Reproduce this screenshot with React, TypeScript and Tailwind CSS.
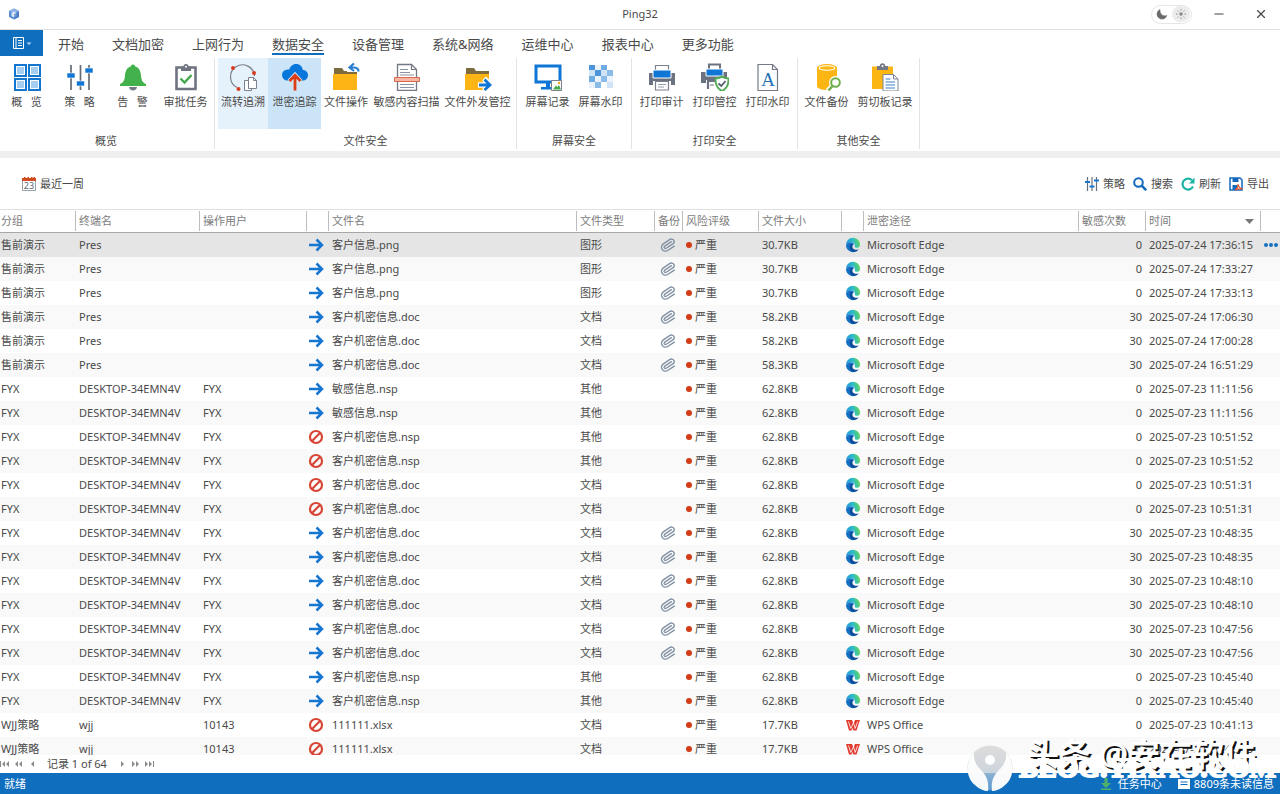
import { useState } from 'react';
import type { ReactNode } from 'react';
import { Minus, Paperclip, X } from 'lucide-react';

type Status = 'sent' | 'blocked';
type App = 'edge' | 'wps';

interface LeakRecord {
  group: string;
  terminal: string;
  user: string;
  status: Status;
  file: string;
  type: string;
  backup: boolean;
  size: string;
  app: App;
  hits: number;
  time: string;
}

function row(
  group: string,
  terminal: string,
  user: string,
  status: Status,
  file: string,
  type: string,
  backup: boolean,
  size: string,
  hits: number,
  time: string,
  app: App = 'edge'
): LeakRecord {
  return { group, terminal, user, status, file, type, backup, size, hits, time, app };
}

const PC = 'DESKTOP-34EMN4V';

const RECORDS: LeakRecord[] = [
  row('售前演示', 'Pres', '', 'sent', '客户信息.png', '图形', true, '30.7KB', 0, '2025-07-24 17:36:15'),
  row('售前演示', 'Pres', '', 'sent', '客户信息.png', '图形', true, '30.7KB', 0, '2025-07-24 17:33:27'),
  row('售前演示', 'Pres', '', 'sent', '客户信息.png', '图形', true, '30.7KB', 0, '2025-07-24 17:33:13'),
  row('售前演示', 'Pres', '', 'sent', '客户机密信息.doc', '文档', true, '58.2KB', 30, '2025-07-24 17:06:30'),
  row('售前演示', 'Pres', '', 'sent', '客户机密信息.doc', '文档', true, '58.2KB', 30, '2025-07-24 17:00:28'),
  row('售前演示', 'Pres', '', 'sent', '客户机密信息.doc', '文档', true, '58.3KB', 30, '2025-07-24 16:51:29'),
  row('FYX', PC, 'FYX', 'sent', '敏感信息.nsp', '其他', false, '62.8KB', 0, '2025-07-23 11:11:56'),
  row('FYX', PC, 'FYX', 'sent', '敏感信息.nsp', '其他', false, '62.8KB', 0, '2025-07-23 11:11:56'),
  row('FYX', PC, 'FYX', 'blocked', '客户机密信息.nsp', '其他', false, '62.8KB', 0, '2025-07-23 10:51:52'),
  row('FYX', PC, 'FYX', 'blocked', '客户机密信息.nsp', '其他', false, '62.8KB', 0, '2025-07-23 10:51:52'),
  row('FYX', PC, 'FYX', 'blocked', '客户机密信息.doc', '文档', false, '62.8KB', 0, '2025-07-23 10:51:31'),
  row('FYX', PC, 'FYX', 'blocked', '客户机密信息.doc', '文档', false, '62.8KB', 0, '2025-07-23 10:51:31'),
  row('FYX', PC, 'FYX', 'sent', '客户机密信息.doc', '文档', true, '62.8KB', 30, '2025-07-23 10:48:35'),
  row('FYX', PC, 'FYX', 'sent', '客户机密信息.doc', '文档', true, '62.8KB', 30, '2025-07-23 10:48:35'),
  row('FYX', PC, 'FYX', 'sent', '客户机密信息.doc', '文档', true, '62.8KB', 30, '2025-07-23 10:48:10'),
  row('FYX', PC, 'FYX', 'sent', '客户机密信息.doc', '文档', true, '62.8KB', 30, '2025-07-23 10:48:10'),
  row('FYX', PC, 'FYX', 'sent', '客户机密信息.doc', '文档', true, '62.8KB', 30, '2025-07-23 10:47:56'),
  row('FYX', PC, 'FYX', 'sent', '客户机密信息.doc', '文档', true, '62.8KB', 30, '2025-07-23 10:47:56'),
  row('FYX', PC, 'FYX', 'sent', '客户机密信息.nsp', '其他', false, '62.8KB', 0, '2025-07-23 10:45:40'),
  row('FYX', PC, 'FYX', 'sent', '客户机密信息.nsp', '其他', false, '62.8KB', 0, '2025-07-23 10:45:40'),
  row('WJJ策略', 'wjj', '10143', 'blocked', '111111.xlsx', '文档', false, '17.7KB', 0, '2025-07-23 10:41:13', 'wps'),
  row('WJJ策略', 'wjj', '10143', 'blocked', '111111.xlsx', '文档', false, '17.7KB', 0, '2025-07-23 10:41:13', 'wps'),
];

const TABS = ['开始', '文档加密', '上网行为', '数据安全', '设备管理', '系统&网络', '运维中心', '报表中心', '更多功能'];

const Svg = ({ children }: { children: ReactNode }) => (
  <svg viewBox="0 0 28 28" className="w-7 h-7" fill="none" aria-hidden="true">
    {children}
  </svg>
);

const Folder = () => (
  <>
    <path d="M2 5h8l2 3h13v5H2z" fill="#7d6b3c" />
    <path d="M1 11h24v16H1z" fill="#fdb515" />
  </>
);

const icons = {
  overview: (
    <Svg>
      {[[2, 2], [16, 2], [2, 16], [16, 16]].map(([x, y]) => (
        <g key={`${x}-${y}`}>
          <rect x={x} y={y} width="11" height="11" stroke="#1275cf" strokeWidth="2" fill="#fff" />
          <rect x={x + 2} y={y + 2} width="7" height="7" fill="#a3cdf1" />
        </g>
      ))}
    </Svg>
  ),
  policy: (
    <Svg>
      <path d="M5 2v25M14.500 2v25M23 2v25" stroke="#666b75" strokeWidth="1.700" />
      <path d="M1 10h8v5H1zM10.500 18h8v5h-8zM19 5h8v5h-8z" fill="#0f76d6" stroke="#fff" strokeWidth=".6" />
    </Svg>
  ),
  alert: (
    <Svg>
      <path d="M14 1.500c1.600 0 2 1 2.200 2 4 1 5.300 4.500 5.800 9 .5 5 1.500 7 5 8.500v2H1v-2c3.500-1.500 4.500-3.500 5-8.500.5-4.500 1.800-8 5.800-9 .2-1 .6-2 2.200-2z" fill="#43b14b" />
      <path d="M10 24h8c0 2-2 3.400-4 3.400S10 26 10 24z" fill="#747a88" />
    </Svg>
  ),
  approve: (
    <Svg>
      <path d="M4.500 4.500h19v21.500h-19z" stroke="#6f7480" strokeWidth="2.600" fill="#fff" />
      <path d="M9 3.500h2.500a2.500 2.500 0 0 1 5 0H19V8H9z" fill="#6f7480" />
      <circle cx="14" cy="3.700" r="1" fill="#fff" />
      <path d="m8.500 15.500 4 4 7-7.500" stroke="#43a84c" strokeWidth="2.400" />
    </Svg>
  ),
  flow: (
    <Svg>
      <path d="M8 24.500A12 12 0 1 1 25.500 13" stroke="#7b808b" strokeWidth="1.200" />
      <circle cx="4" cy="5" r="2" fill="#d83b20" />
      <circle cx="25" cy="10" r="2" fill="#d83b20" />
      <circle cx="9.500" cy="26" r="2" fill="#d83b20" />
      <path d="M15.500 17.500h7v10h-7z" fill="#fff" stroke="#7b808b" />
      <path d="M19.500 14.500h5l3 3v8h-8z" fill="#fff" stroke="#7b808b" />
      <path d="M24.500 14.500v3h3" stroke="#7b808b" />
    </Svg>
  ),
  leak: (
    <Svg>
      <path d="M6.500 17.500a5.500 5.500 0 0 1 0-11c1 0 1.200 0 1.700.2C9 3.500 11.500 1 15 1c4 0 6.300 2.500 6.800 6 3 0 5.200 2.200 5.200 5.200s-2.300 5.300-5.200 5.300z" fill="#0877dc" />
      <path d="M14 28V14M8.500 18.500 14 12.500l5.500 6" stroke="#cfe5f8" strokeWidth="5" />
      <path d="M14 27.500V13M8.500 18 14 12.300l5.500 5.700" stroke="#dd3c18" strokeWidth="2.800" />
    </Svg>
  ),
  fileOp: (
    <Svg>
      <Folder />
      <path d="M15 0h13v9H15z" fill="#fff" />
      <path d="M22 .5 17.500 4.500 22 8M18 4.500h3.500c3 0 5 1 5 4" stroke="#2a7fd0" strokeWidth="2.200" />
    </Svg>
  ),
  scan: (
    <Svg>
      <path d="M4.500 1.500h14l5 5v21h-19z" stroke="#747a85" strokeWidth="1.300" fill="#fff" />
      <path d="M18.500 1.500v5h5" stroke="#747a85" strokeWidth="1.200" />
      <path d="M7 6.500h8M7 9.500h10M7 12h14M7 21.500h14M7 24.500h14" stroke="#8a94a3" />
      <path d="M1.500 14.500h25v4h-25z" fill="#f7b6a4" stroke="#d96a50" />
    </Svg>
  ),
  send: (
    <Svg>
      <Folder />
      <path d="M14 22h12M20 15.500l6.500 6.500-6.500 6" stroke="#fff" strokeWidth="5.500" />
      <path d="M15 22h11M20.500 16.500l5.500 5.500-5.500 5" stroke="#0f76d6" strokeWidth="2.800" />
    </Svg>
  ),
  screenRec: (
    <Svg>
      <path d="M2 3h24v16H2z" stroke="#0f76d6" strokeWidth="3" fill="#fff" />
      <path d="M12 20h4v4h3v2.500H7V24h5z" fill="#0f76d6" />
      <path d="M17.500 17.500h10v10h-10z" fill="#fff" stroke="#7b808b" />
      <path d="m19 26.500 3-4 1.500 1.500 1.500-2 2 4.500z" fill="#4bac4c" />
      <circle cx="25" cy="20" r="1.200" fill="#f6a816" />
    </Svg>
  ),
  screenMark: (
    <Svg>
      <path d="M2 2h6v5H2zM8 7h6v6H8z" fill="#4d95d9" />
      <path d="M14 2h6v5h-6zM2 13h6v6H2z" fill="#70abe1" />
      <path d="M20 7h6v6h-6zM14 13h6v6h-6zM8 19h6v6H8z" fill="#8bbce8" />
      <path d="M20 19h6v6h-6zM2 7h6v6H2zM14 7h6v6h-6z" fill="#d0e4f5" />
      <path d="M8 2h6v5H8zM8 13h6v6H8zM20 13h6v6h-6zM2 19h6v6H2z" fill="#eaf3fb" />
    </Svg>
  ),
  printAudit: (
    <Svg>
      <path d="M7.500 2.500h13v8h-13z" stroke="#7b808b" strokeWidth="1.200" fill="#fff" />
      <path d="M1 10h26v12H1z" fill="#6d7280" />
      <path d="M5 7h18v8H5z" fill="#0f76d6" stroke="#fff" />
      <path d="M5 18h18v8H5z" fill="#fff" />
      <path d="M7.500 18.500h13v8.500h-13z" stroke="#7b808b" strokeWidth="1.200" fill="#fff" />
      <path d="M10 21.500h8M10 24h6" stroke="#9aa0aa" />
    </Svg>
  ),
  printCtrl: (
    <Svg>
      <path d="M8 1.500h11v6H8z" stroke="#6d7280" strokeWidth="2" fill="#fff" />
      <path d="M0 9h26v11H0z" fill="#6d7280" />
      <path d="M5 6h17v7H5z" fill="#0f76d6" stroke="#fff" />
      <path d="M5 17h14v9H5z" fill="#fff" />
      <path d="M7 26V18h9" stroke="#6d7280" strokeWidth="2.200" />
      <path d="M9 22h4" stroke="#6d7280" />
      <path d="M21 13.500c2 1.500 4.500 2 6.500 2 .3 6-1.500 10-6.500 12.500-5-2.500-6.800-6.500-6.500-12.500 2 0 4.500-.5 6.500-2z" fill="#fff" stroke="#55ad57" strokeWidth="1.900" />
      <path d="m17.500 20.500 2.800 2.500 4.200-5" stroke="#55606e" strokeWidth="1.800" />
    </Svg>
  ),
  printMark: (
    <Svg>
      <path d="M4 1.500h14.500l5 5v21H4z" stroke="#747a85" strokeWidth="1.200" fill="#fff" />
      <path d="M18.500 1.500v5h5" stroke="#747a85" strokeWidth="1.200" />
      <text x="14" y="23" textAnchor="middle" fontSize="19" fill="#2472b8" className="font-['Liberation_Serif',serif]">
        A
      </text>
    </Svg>
  ),
  backup: (
    <Svg>
      <path d="M4 4.500v18.500c0 2.500 4.500 4 10 4s10-1.500 10-4V4.500z" fill="#fcb614" />
      <ellipse cx="14" cy="4.800" rx="10" ry="3.700" fill="#fcb614" />
      <ellipse cx="14" cy="5" rx="7.800" ry="2.200" stroke="#fff" strokeWidth="1.100" />
      <path d="m15 28 5-5" stroke="#fff" strokeWidth="6" />
      <circle cx="22.500" cy="19.500" r="4.500" fill="#fff" stroke="#fff" strokeWidth="4" />
      <path d="m15.500 27.500 4-4.500" stroke="#6fae4c" strokeWidth="2.500" />
      <circle cx="22.500" cy="19.500" r="4.300" fill="#fff" stroke="#6fae4c" strokeWidth="2" />
    </Svg>
  ),
  clipboard: (
    <Svg>
      <path d="M1 3.500h21V26H1z" fill="#fcb614" />
      <path d="M6 3h2.800a2.700 2.700 0 0 1 5.400 0H17v4H6z" fill="#747a85" />
      <circle cx="11.500" cy="3" r="1" fill="#fff" />
      <path d="M12 11.500h10.500l4.500 4.500v12H12z" fill="#fff" stroke="#7c8592" />
      <path d="M22.500 11.500V16H27" stroke="#7c8592" />
      <path d="M14.500 16h5M14.500 19h9.500M14.500 22h9.500M14.500 25h9.500" stroke="#3a82c9" strokeWidth="1.200" />
    </Svg>
  ),
};

interface RibbonItem {
  label: string;
  icon: ReactNode;
  width: string;
  state?: string;
}

const RIBBON: { title: string; pad: string; items: RibbonItem[] }[] = [
  {
    title: '概览',
    pad: 'pr-0.5',
    items: [
      { label: '概   览', icon: icons.overview, width: 'w-[53px]' },
      { label: '策   略', icon: icons.policy, width: 'w-[53px]' },
      { label: '告   警', icon: icons.alert, width: 'w-[53px]' },
      { label: '审批任务', icon: icons.approve, width: 'w-[53px]' },
    ],
  },
  {
    title: '文件安全',
    pad: 'px-[3px]',
    items: [
      { label: '流转追溯', icon: icons.flow, width: 'w-[50px]', state: 'bg-[#e5f1fb]' },
      { label: '泄密追踪', icon: icons.leak, width: 'w-[53px]', state: 'bg-[#cce4f7]' },
      { label: '文件操作', icon: icons.fileOp, width: 'w-[50px]' },
      { label: '敏感内容扫描', icon: icons.scan, width: 'w-[71px]' },
      { label: '文件外发管控', icon: icons.send, width: 'w-[71px]' },
    ],
  },
  {
    title: '屏幕安全',
    pad: 'px-1',
    items: [
      { label: '屏幕记录', icon: icons.screenRec, width: 'w-[53px]' },
      { label: '屏幕水印', icon: icons.screenMark, width: 'w-[53px]' },
    ],
  },
  {
    title: '打印安全',
    pad: 'px-[3px]',
    items: [
      { label: '打印审计', icon: icons.printAudit, width: 'w-[53px]' },
      { label: '打印管控', icon: icons.printCtrl, width: 'w-[53px]' },
      { label: '打印水印', icon: icons.printMark, width: 'w-[53px]' },
    ],
  },
  {
    title: '其他安全',
    pad: 'px-0.5',
    items: [
      { label: '文件备份', icon: icons.backup, width: 'w-[53px]' },
      { label: '剪切板记录', icon: icons.clipboard, width: 'w-[64px]' },
    ],
  },
];

function TitleBar() {
  return (
    <header className="grid grid-cols-[1fr_auto_1fr] items-center h-[30px] shrink-0 pb-px border-b border-[#e0e0e0]">
      <svg viewBox="0 0 12 12" className="w-3 h-3 ml-2" aria-hidden="true">
        <path d="M6 .5 11 3v6L6 11.500 1 9V3z" fill="#5b8fd6" />
        <path d="M6 .5 11 3 6 5.800 1 3z" fill="#8db4e8" />
        <path d="M6 3.500 8.500 5v3L6 9.500 3.500 8V5z" fill="#dbe8fa" />
        <path d="M6 6v5.500L11 9V3.500z" fill="#3d72bd" opacity=".6" />
      </svg>
      <h1>Ping32</h1>
      <div className="flex items-center justify-end pr-3">
        <button aria-label="主题" className="flex items-center w-[41px] h-[19px] pl-1 rounded-full border border-[#e6e6e6] mr-5">
          <svg viewBox="0 0 12 12" className="w-3 h-3" aria-hidden="true">
            <path d="M4 1.500A5 5 0 1 0 10.800 7.500C7 9 3.500 6 4 1.500z" fill="#6a6a6a" stroke="#6a6a6a" strokeWidth=".6" />
          </svg>
          <span className="flex items-center justify-center w-[18px] h-4 ml-1 rounded-full bg-[#ececec]">
            <svg viewBox="0 0 12 12" className="w-3 h-3" stroke="#8a8a8a" aria-hidden="true">
              <circle cx="6" cy="6" r="1.800" fill="#8a8a8a" stroke="none" />
              <path d="M6 1v1.600M6 9.400V11M1 6h1.600M9.400 6H11M2.500 2.500l1 1M8.500 8.500l1 1M2.500 9.500l1-1M8.500 3.500l1-1" strokeWidth=".9" />
            </svg>
          </span>
        </button>
        <button aria-label="最小化" className="mr-7">
          <Minus className="w-3.5 h-3.5 text-[#444]" />
        </button>
        <button aria-label="关闭">
          <X className="w-3.5 h-3.5 text-[#444]" />
        </button>
      </div>
    </header>
  );
}

function TabBar({ active, onSelect }: { active: string; onSelect: (tab: string) => void }) {
  return (
    <nav className="flex h-[26px] shrink-0">
      <button aria-label="文件菜单" className="flex items-center justify-center w-[43px] mr-[15px] bg-[#106ebe]">
        <svg viewBox="0 0 20 14" className="w-5 h-3.5" fill="none" stroke="#fff" aria-hidden="true">
          <path d="M1.500 1.500h10v11h-10zM4 1.500v11M6 4.500h4M6 7h4M6 9.500h4" />
          <path d="M14.500 6.500h5L17 9z" fill="#b5d3ee" stroke="none" />
        </svg>
      </button>
      <div className="flex items-start gap-7 pt-1">
        {TABS.map((tab) => (
          <button
            key={tab}
            onClick={() => onSelect(tab)}
            className={`h-[21px] text-[13px] leading-5 border-b-2 ${tab === active ? 'border-[#106ebe]' : 'border-transparent'}`}
          >
            {tab}
          </button>
        ))}
      </div>
    </nav>
  );
}

function Ribbon() {
  return (
    <section className="flex h-[95px] shrink-0 pt-0.5 pb-0.5">
      {RIBBON.map((group) => (
        <div key={group.title} className={`flex flex-col border-r border-[#e3e3e3] ${group.pad}`}>
          <div className="flex">
            {group.items.map((item) => (
              <button
                key={item.label}
                className={`flex flex-col items-center h-[71px] pt-[5px] gap-[3px] ${item.width} ${item.state ?? ''}`}
              >
                {item.icon}
                <span className="leading-4 whitespace-pre">{item.label}</span>
              </button>
            ))}
          </div>
          <div className="mt-1 text-center leading-4">{group.title}</div>
        </div>
      ))}
    </section>
  );
}

function ToolButton({ label, children }: { label: string; children: ReactNode }) {
  return (
    <button className="flex items-center gap-1">
      <svg viewBox="0 0 14 14" className="w-3.5 h-3.5" fill="none" aria-hidden="true">
        {children}
      </svg>
      {label}
    </button>
  );
}

function Toolbar() {
  return (
    <div className="flex items-center justify-between h-[51px] shrink-0 pl-[22px] pr-[11px]">
      <button className="flex items-center gap-1">
        <svg viewBox="0 0 14 14" className="w-3.5 h-3.5" aria-hidden="true">
          <path d="M.5 3h13v10.500H.5z" fill="#fff" stroke="#9aa0a8" />
          <path d="M0 1h2V0h1.500v1h2V0H7v1h2V0h1.500v1h1V0H13v1h1v3H0z" fill="#cf4a1c" />
          <text x="7" y="12.300" textAnchor="middle" fontSize="9" fill="#5a6472">23</text>
        </svg>
        最近一周
      </button>
      <div className="flex gap-2">
        <ToolButton label="策略">
          <path d="M2.500 0v14M7 0v14M11.500 0v14" stroke="#68707c" strokeWidth="1.200" />
          <path d="M0 5h5M4.500 9.500h5M9 3.500h5" stroke="#1677cf" strokeWidth="1.800" />
        </ToolButton>
        <ToolButton label="搜索">
          <circle cx="5.500" cy="5.500" r="4.300" stroke="#1468bd" strokeWidth="2" />
          <path d="m8.700 8.700 4.500 4.500" stroke="#1468bd" strokeWidth="2.500" />
        </ToolButton>
        <ToolButton label="刷新">
          <path d="M12 9.500A5.500 5.500 0 1 1 11 3.200" stroke="#1cb5a5" strokeWidth="2.200" />
          <path d="M13.500.5v6H8z" fill="#1cb5a5" />
        </ToolButton>
        <ToolButton label="导出">
          <path d="M1 1h10l2 2v10H1z" stroke="#1468bd" strokeWidth="1.500" fill="#fff" />
          <path d="M3.500 1h6v4h-6zM3.500 8h5v5h-5z" fill="#1468bd" />
          <path d="M6 13c2-1 3.200-4 3-6 .5 3 2 4.500 4.500 5-3-.3-5 0-7.500 1z" fill="#fff" stroke="#e2522c" strokeWidth="1.200" />
        </ToolButton>
      </div>
    </div>
  );
}

function StatusIcon({ status }: { status: Status }) {
  if (status === 'blocked') {
    return (
      <svg viewBox="0 0 16 16" className="w-4 h-4 ml-0.5" fill="none" aria-label="已阻止">
        <circle cx="8" cy="8" r="6" stroke="#d64535" strokeWidth="2.200" />
        <path d="m4 12 8-8" stroke="#d64535" strokeWidth="2.200" />
      </svg>
    );
  }
  return (
    <svg viewBox="0 0 16 16" className="w-4 h-4 ml-0.5" fill="none" aria-label="已发送">
      <path d="M1 8h13M8.500 2.500 14 8l-5.500 5.500" stroke="#1677d2" strokeWidth="2.500" />
    </svg>
  );
}

function AppIcon({ app }: { app: App }) {
  if (app === 'wps') {
    return (
      <svg viewBox="0 0 16 16" className="w-4 h-4 ml-1" fill="none" aria-hidden="true">
        <path d="M1 3h6l1.500 4L10 3h5l-3.500 10.500H8.500L7.500 11l-1 2.500H4z" fill="#e23a2e" />
        <path d="m3.500 4.500 2.300 7L8.500 5.500l1.700 6 2.500-7" stroke="#fff" strokeWidth=".8" />
      </svg>
    );
  }
  return (
    <svg viewBox="0 0 16 16" className="w-4 h-4 ml-1" aria-hidden="true">
      <defs>
        <linearGradient id="edgeTop" x1="0" y1="0.6" x2="1" y2="0.4">
          <stop offset="0" stopColor="#1a8fdc" />
          <stop offset=".5" stopColor="#2bbccb" />
          <stop offset="1" stopColor="#62d65a" />
        </linearGradient>
      </defs>
      <path d="M1 8a7 7 0 0 1 14-.5c.2 2-1 3.300-3 3.300-1.600 0-2.600-.6-2.300-1.500.8-2-.7-4-3.200-4C3.500 5.300 1.500 6.500 1 8z" fill="url(#edgeTop)" />
      <path d="M1 8c.5-1.700 2.500-2.800 5-2.800 1.700 0 3.200 1 3.500 2.500C8.300 6.900 6.500 8 6.500 10c0 3 3 5 5.500 3.800A7 7 0 0 1 1 8z" fill="#1572c4" />
      <path d="M5.500 7.200c-2 2.800-.5 7 3.500 7.700a7 7 0 0 0 5-2.700c-1.500.8-3.500.9-5 0-1.700-1-2-3-1-4.300-.8-.9-1.700-1.100-2.500-.7z" fill="#0b4d99" />
    </svg>
  );
}

function RecordTable({ records }: { records: LeakRecord[] }) {
  const headers = ['分组', '终端名', '操作用户', '', '文件名', '文件类型', '备份', '风险评级', '文件大小', '', '泄密途径', '敏感次数', '时间', ''];

  return (
    <div className="flex-1 min-h-0 overflow-hidden">
      <table className="w-full table-fixed border-collapse whitespace-nowrap">
        <colgroup>
          <col className="w-[75px]" />
          <col className="w-[124px]" />
          <col className="w-[107px]" />
          <col className="w-[22px]" />
          <col className="w-[248px]" />
          <col className="w-[78px]" />
          <col className="w-[28px]" />
          <col className="w-[76px]" />
          <col className="w-[83px]" />
          <col className="w-[22px]" />
          <col />
          <col className="w-[67px]" />
          <col className="w-[115px]" />
          <col className="w-5" />
        </colgroup>
        <thead>
          <tr className="h-[23px] border-t border-b border-t-[#e0e0e0] border-b-[#a8a8a8] text-[#7c7c7c]">
            {headers.map((label, i) => (
              <th key={i} className="p-0 text-left font-normal">
                <div
                  className={`flex items-center justify-between h-5 pr-1.5 ${i === 0 ? 'pl-px' : 'border-l border-[#bdbdbd] pl-[3px]'}`}
                >
                  {label}
                  {label === '时间' && (
                    <svg viewBox="0 0 9 5" className="w-[9px] h-[5px]" aria-hidden="true">
                      <path d="M0 0h9L4.500 5z" fill="#777" />
                    </svg>
                  )}
                </div>
              </th>
            ))}
          </tr>
        </thead>
        <tbody>
          {records.map((r, i) => (
            <tr key={i} className={`h-6 ${i === 0 ? 'bg-[#e5e5e5]' : i % 2 ? 'bg-[#f9f9f9]' : 'bg-white'}`}>
              <td className="p-0 pl-px">{r.group}</td>
              <td className="p-0 pl-1">{r.terminal}</td>
              <td className="p-0 pl-1">{r.user}</td>
              <td className="p-0">
                <StatusIcon status={r.status} />
              </td>
              <td className="p-0 pl-1">{r.file}</td>
              <td className="p-0 pl-1">{r.type}</td>
              <td className="p-0">
                {r.backup && <Paperclip className="w-4 h-4 ml-1.5 rotate-12 text-[#8290a3]" strokeWidth={2} />}
              </td>
              <td className="p-0 pl-1">
                <span className="flex items-center gap-[3px]">
                  <span className="w-1.5 h-1.5 rounded-full bg-[#d23c17]" />
                  严重
                </span>
              </td>
              <td className="p-0 pl-1">{r.size}</td>
              <td className="p-0">
                <AppIcon app={r.app} />
              </td>
              <td className="p-0 pl-1">{r.app === 'edge' ? 'Microsoft Edge' : 'WPS Office'}</td>
              <td className="p-0 pr-[3px] text-right">{r.hits}</td>
              <td className="p-0 pl-1">{r.time}</td>
              <td className="p-0">
                {i === 0 && (
                  <button aria-label="更多" className="flex gap-px pl-1">
                    <span className="w-1 h-1 rounded-full bg-[#1670c0]" />
                    <span className="w-1 h-1 rounded-full bg-[#1670c0]" />
                    <span className="w-1 h-1 rounded-full bg-[#1670c0]" />
                  </button>
                )}
              </td>
            </tr>
          ))}
        </tbody>
      </table>
    </div>
  );
}

function PagerButton({ label, d }: { label: string; d: string }) {
  return (
    <button aria-label={label}>
      <svg viewBox="0 0 10 6" className="w-2.5 h-1.5" fill="#8a8a8a" aria-hidden="true">
        <path d={d} />
      </svg>
    </button>
  );
}

function Pager() {
  return (
    <div className="flex items-center h-[18px] shrink-0">
      <div className="flex gap-1 w-[47px]">
        <PagerButton label="首页" d="M0 0h1v6H0zM5 0v6L2 3zM9 0v6L6 3z" />
        <PagerButton label="上一组" d="M4 0v6L1 3zM8 0v6L5 3z" />
        <PagerButton label="上一页" d="M6 0v6L3 3z" />
      </div>
      <span>记录 1 of 64</span>
      <div className="flex gap-1 ml-2.5">
        <PagerButton label="下一页" d="M4 0v6l3-3z" />
        <PagerButton label="下一组" d="M1 0v6l3-3zM5 0v6l3-3z" />
        <PagerButton label="末页" d="M0 0v6l3-3zM4 0v6l3-3zM8 0h1v6H8z" />
      </div>
    </div>
  );
}

function StatusBar() {
  return (
    <footer className="flex items-center justify-between h-[21px] shrink-0 pl-1 pr-1.5 bg-[#106ebe] text-white">
      <span>就绪</span>
      <div className="flex items-center gap-4">
        <button className="flex items-center gap-1.5">
          <svg viewBox="0 0 12 12" className="w-3 h-3" fill="#4fb06a" aria-hidden="true">
            <path d="M4.500 0h3v5H11L6 10 1 5h3.500zM1 10.500h10V12H1z" />
          </svg>
          任务中心
        </button>
        <button className="flex items-center gap-1">
          <svg viewBox="0 0 12 12" className="w-3 h-3" fill="#fff" aria-hidden="true">
            <path d="M0 1h12v10H0z" />
            <path d="M2.500 4h7M2.500 6.500h7" stroke="#106ebe" />
          </svg>
          8809条未读信息
        </button>
      </div>
    </footer>
  );
}

// Overlay stamps in the bottom right corner
function Watermarks() {
  return (
    <div className="pointer-events-none">
      <div className="absolute right-6 bottom-6 text-[32px] leading-8 font-bold text-white whitespace-nowrap [text-shadow:2px_2px_0_#111]">
        头条 @安在软件
      </div>
      <div className="absolute right-1 bottom-[3px] flex items-center gap-1.5">
        <svg viewBox="0 0 46 46" className="w-[46px] h-[46px]" aria-hidden="true">
          <defs>
            <linearGradient id="stamp" x1="0" y1="0" x2="0" y2="1">
              <stop offset="0" stopColor="#d6d6d6" stopOpacity=".8" />
              <stop offset=".5" stopColor="#c4ccd4" stopOpacity=".8" />
              <stop offset="1" stopColor="#8db8de" stopOpacity=".6" />
            </linearGradient>
          </defs>
          <circle cx="23" cy="23" r="22.500" fill="url(#stamp)" />
          <g fill="#fff" opacity=".95">
            <path d="M7 7C-1 16-2 32 8 40c4 4 9 6 13 6 1-9-1-15-7-21C9 20 6 14 7 7z" />
            <path d="M39 7c8 9 9 25-1 33-4 4-9 6-13 6-1-9 1-15 7-21 5-5 8-11 7-18z" />
            <circle cx="23" cy="15" r="5" />
          </g>
        </svg>
        <span className="font-['Liberation_Serif',serif] text-[28px] leading-7 font-bold text-white [-webkit-text-stroke:2px_white] [text-shadow:0_0_1px_#ccc]">
          BLOG.YIXAO.COM
        </span>
      </div>
    </div>
  );
}

export default function App() {
  const [tab, setTab] = useState('数据安全');

  return (
    <div className="relative flex flex-col h-screen overflow-hidden bg-white text-[#4a4a4a] text-[11px] leading-4 font-['Noto_Sans','Noto_Sans_CJK_SC',sans-serif]">
      <TitleBar />
      <TabBar active={tab} onSelect={setTab} />
      <Ribbon />
      <div className="h-[7px] shrink-0 bg-[#efefef]" />
      <Toolbar />
      <RecordTable records={RECORDS} />
      <Pager />
      <StatusBar />
      <Watermarks />
    </div>
  );
}
